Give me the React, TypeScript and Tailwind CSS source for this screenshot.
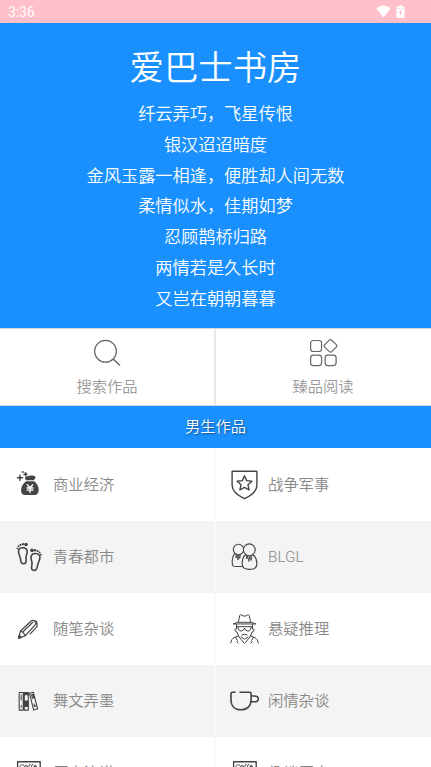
import React from "react";

const cjk = "font-['Noto_Sans_CJK_SC','Liberation_Sans',sans-serif]";

const poem = [
  "纤云弄巧，飞星传恨",
  "银汉迢迢暗度",
  "金风玉露一相逢，便胜却人间无数",
  "柔情似水，佳期如梦",
  "忍顾鹊桥归路",
  "两情若是久长时",
  "又岂在朝朝暮暮",
];

function Icon({ children, sw = 1.3 }: { children: React.ReactNode; sw?: number }) {
  return (
    <svg className="h-[30px] w-[30px] shrink-0 overflow-visible" viewBox="0 0 30 30" fill="none" stroke="#444" strokeWidth={sw} strokeLinecap="round" strokeLinejoin="round">
      {children}
    </svg>
  );
}

const MoneyBag = () => (
  <Icon>
    <path d="M11 8.400q0-2.400 2-2.200 3-.8 5-.6 2-.1 3 .6 1.200.6 0 2.400L19.800 10.300h-7.600z" fill="#444" stroke="none" />
    <path d="M12 11.300h8.200c2.800 2.100 4.500 5.200 4.500 8.400 0 3.200-1.500 5.300-4.200 5.300h-9.300C8.500 25 7 23 7 20.200c0-3.200 2-6.600 5-8.900z" fill="#444" stroke="none" />
    <path d="M13.300 14.800l2.700 3 2.700-3M13 18h6M13 20.200h6M16 18v4.500" stroke="#fff" strokeWidth="1.300" />
    <path d="M3.500 7.700h5M6 5.200v5M10 4.300h3M11.500 2.800v3" strokeWidth="1.500" />
    <path d="M8.300 2h1" />
  </Icon>
);
const Shield = () => (
  <Icon sw={1.4}>
    <path d="M2.700 1.200h23.600q.6 0 .6.600V15c0 6.500-5.500 10.500-12.400 13.600C7.600 25.500 2.100 21.500 2.100 15V1.800q0-.6.600-.6z" />
    <path d="M14.500 5.800l2.200 4.800 5.200.6-3.900 3.600 1.100 5.200-4.600-2.600-4.600 2.600 1.100-5.200-3.900-3.600 5.200-.6z" />
  </Icon>
);
const Feet = () => (
  <Icon sw={1.600}>
    <path d="M4.500 10C4.200 7.200 6 6 8.500 5.800c3.200-.1 5 1.600 4.700 4.500-.3 2.500-1.500 3.500-1.200 6.200.3 2.800.6 4.900-2 5.200-2.400.2-3.300-1.600-3.400-4C6.400 15 4.800 12.500 4.500 10z" />
    <path d="M25.900 16.200c.4-3-1.600-4.600-4.300-4.700-3-.1-4.900 1.700-4.600 4.500.2 2.400 1.300 3.900 1 6.200-.3 2.500-1.400 5.600 1.200 6.100 2.700.5 3.900-1.400 4.200-4.100.3-3 2.100-5.100 2.500-8z" />
    <g fill="#444" stroke="none">
      <circle cx="12" cy="2.500" r="1.800" /><circle cx="9" cy="2.100" r="1.200" /><circle cx="6.500" cy="2.800" r="1.100" /><circle cx="4.600" cy="4.300" r="1" /><circle cx="3.400" cy="6.300" r=".9" />
      <circle cx="18" cy="8.400" r="1.800" /><circle cx="21" cy="8.200" r="1.200" /><circle cx="23.600" cy="9" r="1.100" /><circle cx="25.600" cy="10.600" r="1" /><circle cx="26.900" cy="12.700" r=".9" />
    </g>
  </Icon>
);
const Couple = () => (
  <Icon sw={1.1}>
    <path d="M4.500 11.800C2.700 14 2.200 17 2.200 20.500c0 3.500 1 4 4 4h6.500" />
    <circle cx="8.500" cy="7.500" r="5.200" />
    <path d="M15.500 12.700c-2.600 2-3.300 5.800-3.300 9.300 0 4.200 2.500 5.400 7.400 5.400 5 0 7.300-1.200 7.300-5.400 0-3.500-.9-7.300-4-9.300" fill="#f4f4f4" />
    <circle cx="19.300" cy="7.800" r="5.900" fill="#f4f4f4" />
    <path d="M5.800 12.500l.4 3.500.9-3 .9 5 .8-5.500.9 4 .9-4M16.200 13.500l.6 3.500.9-3 1.200 5.500.9-5.500 1.300 4.500.8-5" strokeWidth=".9" />
  </Icon>
);
const Pencil = () => (
  <Icon sw={1.2}>
    <path d="M4.500 24.200l2-7.200L17.500 6.800q1.600-1.200 3.300.5t.6 3.400L11.300 21.700zM6.500 17q3 .8 4.800 4.700M9.300 17.500L18.800 8.300M20.800 7q2-.3 2.200 2.200v3.500l-6.800 7.200" />
    <path d="M4.500 24.200l.8-3 2.100 2.200z" fill="#444" />
  </Icon>
);
const Detective = () => (
  <Icon sw={1}>
    <path d="M8.300 8L9.900 1.300q.3-1 1.600-.3l1.800 1h2.400l1.800-1q1.300-.7 1.600.3L20.700 8M3.500 9.800l4-1.500h14l4 1.500z" />
    <path d="M6.500 10.500V15q-1.700-.5-1.500 1.200t2 1.800l1.500 4M22.500 10.500V15q1.700-.5 1.500 1.200t-2 1.800l-1.500 4M7 12.700h15M8 13q0 4.200 3.200 4 2.700-.2 3.300-3 .6 2.800 3.300 3 3.200.2 3.200-4M11.800 21q2.700-1.800 5.400 0" />
    <path d="M8.500 22L5 23.300Q.8 25 .8 29M20.500 22l3.500 1.300q4.200 1.700 4.200 5.700M8.500 22.300L14 29M20.500 22.300L15 29M5.500 23.300L7.500 26.500l-.7 1.200 1.500 1.500M23.500 23.300l-2 3.200.7 1.200-1.500 1.500M11 23l3.500 2.200L18 23" />
  </Icon>
);
const Books = () => (
  <Icon sw={1.1}>
    <path d="M5.200 6.500h4v17.600h-4zM10.300 6.500h4v17.600h-4z" />
    <path d="M10.500 6.800H14v2h-3.500zM10.500 15H14v5.500h-3.500z" fill="#444" />
    <path d="M15.400 7.300l3.900-1.100L23.600 23l-3.900 1zM17.500 8.800l1 3.500 1.200-.4-1-3.500zM20 18l.7 2.500 1.200-.4" />
    <path d="M7.200 9v5M7.200 19.500v2" strokeWidth="1" />
  </Icon>
);
const Cup = () => (
  <Icon sw={1.6}>
    <path d="M5 6.300H2.300q-1.300 0-1.300 1.300V14c0 5.800 3.700 9.800 10 9.800 6.200 0 10.100-4 10.100-9.800V7.600q0-1.300-1.300-1.300H10M21.400 10h3c3 0 3.900 1.200 3.900 2.900s-.9 2.900-3.900 2.900h-3" />
  </Icon>
);
const Sign = () => (
  <Icon sw={1.4}>
    <path d="M3.600 3.700h22.600v22H3.600z" />
    <path d="M9.800 7.300q-3.500-1.700-3.700 1.500 0 2.500 3.500 1.700M12 7.500q-1.500 0-1.500 1.500t1.500 1.500 1.500-1.500-1.500-1.500M15 11V7.500q0-1 1.200-1M17.600 11V7.500q0-1 1.200-1M20 9h2.500q0-1.700-1.300-1.700T20 9.200q.2 1.800 2.500 1.300" strokeWidth="1" />
  </Icon>
);

const rows = [
  [["商业经济", MoneyBag], ["战争军事", Shield]],
  [["青春都市", Feet], ["BLGL", Couple]],
  [["随笔杂谈", Pencil], ["悬疑推理", Detective]],
  [["舞文弄墨", Books], ["闲情杂谈", Cup]],
  [["历史演说", Sign], ["趣谈历史", Sign]],
] as [string, () => React.JSX.Element][][];

export default function App() {
  return (
    <div className={`h-[767px] w-[431px] overflow-hidden bg-white text-[#888] ${cjk}`}>
      <div className="flex h-[23px] items-center justify-between bg-[#ffc0cb] pr-[26px] pl-2 text-white">
        <span className="pt-[1px] text-[14px] leading-none font-normal tracking-[-0.1px] [font-family:Roboto,sans-serif]">3:36</span>
        <div className="flex items-center gap-[5px]">
          <svg className="h-[13px] w-[15px]" viewBox="0 0 15 13"><path d="M.3 3.200Q7.500-2 14.700 3.200L7.500 12.500z" fill="white" /></svg>
          <svg className="h-[13px] w-[9px]" viewBox="0 0 9 13"><path d="M.5 1.500H3V.300h3v1.200h2.500v11.200h-8z" fill="white" /><path d="M2 3.500h1.300M5.700 3.500H7M4.500 5v5M3 7.500h3" stroke="#ffc0cb" strokeWidth="1" /></svg>
        </div>
      </div>

      <header className="flex h-[305px] flex-col items-center bg-[#1a90ff] pt-[17px] text-white">
        <h1 className="text-[34.400px] leading-[51px] font-[350]">爱巴士书房</h1>
        <div className="mt-[7.300px] text-center text-[17.200px] leading-[30.700px] font-[350]">
          {poem.map((line) => <p key={line}>{line}</p>)}
        </div>
      </header>

      <nav className="grid h-[78px] grid-cols-[215px_1fr] border-y border-[#d9d9d9] text-[15.300px] font-[350] text-[#999]">
        <div className="flex flex-col items-center border-r border-[#e9e9e9] pt-[9px]">
          <svg className="h-[30px] w-[30px]" viewBox="0 0 30 30" fill="none" stroke="#666" strokeWidth="1.200"><circle cx="13.500" cy="13.300" r="10.900" /><path d="M21.200 21l6.800 6.500" strokeWidth="1.500" /></svg>
          <span className="mt-[6px] leading-[22px]">搜索作品</span>
        </div>
        <div className="flex flex-col items-center border-l border-[#e9e9e9] pt-[9px] pr-px">
          <svg className="h-[30px] w-[30px]" viewBox="0 0 30 30" fill="none" stroke="#666" strokeWidth="1.200">
            <rect x="2.600" y="2.500" width="11" height="11" rx="2.800" /><rect x="2.600" y="17.100" width="11" height="10.500" rx="2.800" /><rect x="17.100" y="17.100" width="11" height="10.500" rx="2.800" /><rect x="17.600" y="3" width="9.800" height="9.800" rx="1.700" transform="rotate(45 22.500 7.900)" />
          </svg>
          <span className="mt-[6px] leading-[22px]">臻品阅读</span>
        </div>
      </nav>

      <h2 className="h-[42px] bg-[#1a90ff] text-center text-[15.300px] leading-[38px] font-[350] text-white [text-shadow:1px_1px_2px_rgba(0,0,0,0.5)]">男生作品</h2>

      <main className="text-[15.300px] font-[350]">
        {rows.map((row, index) => (
          <section key={index} className={`grid grid-cols-[215px_1fr] ${index === 0 ? "h-[73px]" : "h-[72px]"} ${index % 2 ? "bg-[#f4f4f4]" : "bg-white"}`}>
            {row.map(([label, Art], column) => (
              <div key={label} className={`flex items-center pl-[14px] ${column === 0 ? "gap-[9px] border-r border-[#f9f9f9]" : "gap-2 border-l border-[#f9f9f9]"}`}>
                <Art />
                <span className={`leading-none ${label === "BLGL" ? "pt-[2px] font-light [font-family:Roboto,sans-serif]" : "pb-[2px]"}`}>{label}</span>
              </div>
            ))}
          </section>
        ))}
      </main>
    </div>
  );
}
